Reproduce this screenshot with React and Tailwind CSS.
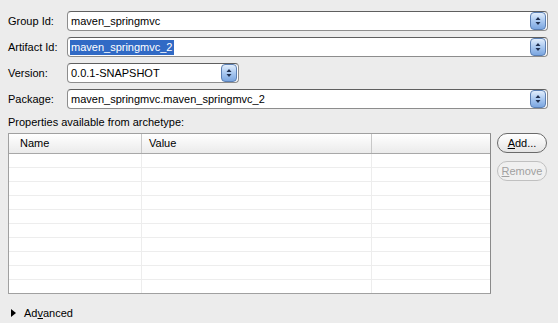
import React from "react";

function Spinner() {
  return (
    <div className="w-[16px] h-[18px] mr-[1px] rounded-[4px] border border-[#5b7fb3] bg-gradient-to-b from-[#e2eefc] via-[#a9c8f0] to-[#7ba6e0] flex items-center justify-center">
      <svg width="6" height="10" viewBox="0 0 6 10">
        <path d="M3 1 L5.5 4 L0.5 4 Z" fill="#1f2f4f" />
        <path d="M3 9 L5.5 6 L0.5 6 Z" fill="#1f2f4f" />
      </svg>
    </div>
  );
}

function Field({ value, selected, width }) {
  return (
    <div
      className={`h-[20px] ${width} rounded-[4px] border border-[#8d8d8d] border-t-[#5f5f5f] bg-white flex items-center justify-between pl-[2px]`}
    >
      {selected ? (
        <span className="bg-[#316ac5] text-white px-[1px] leading-[15px]">{value}</span>
      ) : (
        <span className="px-[1px]">{value}</span>
      )}
      <Spinner />
    </div>
  );
}

function Row({ label, children }) {
  return (
    <div className="flex items-center">
      <div className="w-[59px] shrink-0">{label}</div>
      {children}
    </div>
  );
}

export default function App() {
  const rows = Array.from({ length: 10 });
  return (
    <div
      className="w-[558px] h-[323px] bg-[#ececec] text-[11px] text-black pl-[8px] pr-[10px] pt-[11px] flex flex-col"
      style={{ fontFamily: '"Liberation Sans", Arial, sans-serif' }}
    >
      <div className="flex flex-col gap-[6px]">
        <Row label="Group Id:">
          <Field value="maven_springmvc" width="flex-1" />
        </Row>
        <Row label="Artifact Id:">
          <Field value="maven_springmvc_2" selected width="flex-1" />
        </Row>
        <Row label="Version:">
          <Field value="0.0.1-SNAPSHOT" width="w-[172px]" />
        </Row>
        <Row label="Package:">
          <Field value="maven_springmvc.maven_springmvc_2" width="flex-1" />
        </Row>
      </div>

      <div className="mt-[6px] leading-[14px]">Properties available from archetype:</div>

      <div className="flex mt-[4px] gap-[6px]">
        <div className="w-[483px] h-[161px] border border-[#a0a0a0] border-r-[#8a8a8a] bg-white overflow-hidden">
          <div className="flex h-[20px] border-b border-[#a8a8a8] bg-gradient-to-b from-[#ffffff] to-[#ebebeb]">
            <div className="w-[133px] border-r border-[#c8c8c8] pl-[11px] flex items-center">Name</div>
            <div className="w-[230px] border-r border-[#c8c8c8] pl-[7px] flex items-center">Value</div>
            <div className="flex-1" />
          </div>
          {rows.map((_, i) => (
            <div key={i} className="flex h-[14px] border-b border-[#ededed]">
              <div className="w-[133px] border-r border-[#ededed]" />
              <div className="w-[230px] border-r border-[#ededed]" />
              <div className="flex-1" />
            </div>
          ))}
        </div>
        <div className="flex flex-col gap-[8px]">
          <div className="w-[50px] h-[20px] rounded-full border border-[#6a6a6a] bg-gradient-to-b from-white to-[#e4e4e4] flex items-center justify-center">
            <span>
              <span className="underline">A</span>dd...
            </span>
          </div>
          <div className="w-[50px] h-[20px] rounded-full border border-[#c0c0c0] bg-[#f0f0f0] text-[#a0a0a0] flex items-center justify-center">
            <span>
              <span className="underline">R</span>emove
            </span>
          </div>
        </div>
      </div>

      <div className="flex items-center mt-[12px] pl-[3px] leading-[14px]">
        <svg width="5" height="8" viewBox="0 0 5 8" className="mr-[8px]">
          <path d="M0 0 L5 4 L0 8 Z" fill="#000" />
        </svg>
        <span>
          Ad<span className="underline">v</span>anced
        </span>
      </div>
    </div>
  );
}
